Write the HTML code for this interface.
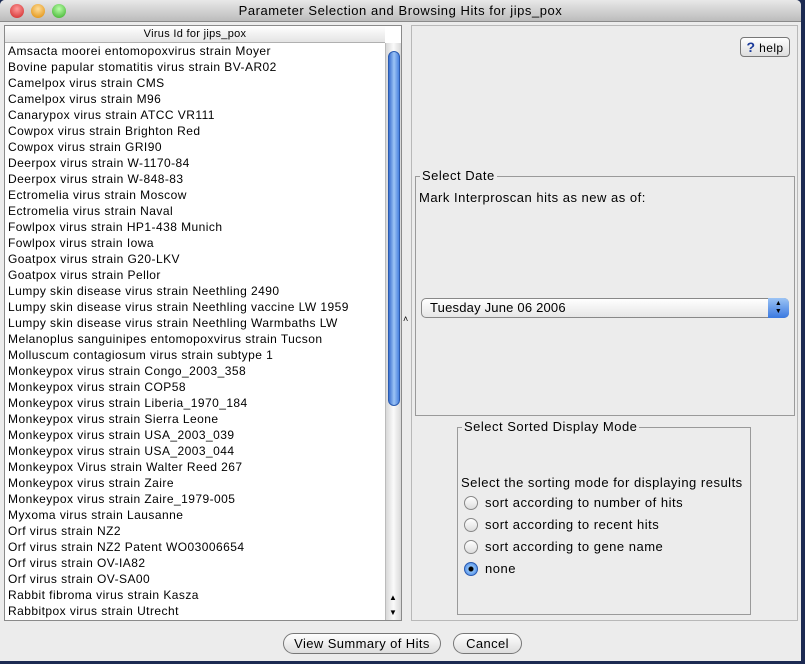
<!DOCTYPE html>
<html><head><style>
*{margin:0;padding:0;box-sizing:border-box}
body{width:805px;height:664px;background:#1c2a52;font-family:"Liberation Sans",sans-serif;font-size:12px;color:#000;position:relative;overflow:hidden}
.win{position:absolute;left:0;top:0;width:801px;height:661px;background:#ececec;border-radius:5px 5px 0 0;overflow:hidden}
.title{height:22px;background:linear-gradient(#e8e8e8,#bcbcbc);border-bottom:1px solid #8a8a8a;text-align:center;font-size:13px;line-height:22px;letter-spacing:0.55px}
.dot{position:absolute;top:4px;width:14px;height:14px;border-radius:50%}
.a{position:absolute}
.list{left:4px;top:25px;width:398px;height:596px;border:1px solid #8a8a8a;background:#fff}
.hdr{height:17px;border-bottom:1px solid #b0b0b0;background:linear-gradient(#fff,#e4e4e4);text-align:center;font-size:11px;line-height:17px;width:380px;letter-spacing:0.3px}
.rows div{height:16px;line-height:16px;padding-left:3px;white-space:nowrap;letter-spacing:0.45px}
.sb{left:380px;top:17px;width:16px;height:577px;background:linear-gradient(90deg,#d8d8d8,#fafafa,#d8d8d8);border-left:1px solid #bbb}
.thumb{left:2px;top:8px;width:12px;height:355px;border-radius:6px;background:linear-gradient(90deg,#3a6fd0,#9cc4f5,#4a82e0);border:1px solid #2a5bb0}
.grp{border:1px solid #9a9a9a;font-size:13px;letter-spacing:0.5px}
.leg{position:absolute;top:-9px;background:#ececec;padding:0 2px}
.btn{border:1px solid #777;border-radius:11px;background:linear-gradient(#fff,#ddd);text-align:center;font-size:13px;line-height:19px;letter-spacing:0.4px}
.r{position:absolute;left:6px;width:14px;height:14px;border-radius:50%;border:1px solid #888;background:linear-gradient(#fff,#ddd)}
.rl{position:absolute;left:27px;white-space:nowrap}
</style></head><body>
<div class="win">
<div class="title">Parameter Selection and Browsing Hits for jips_pox</div>
<div class="dot" style="left:10px;background:radial-gradient(circle at 50% 35%,#f99,#c22)"></div>
<div class="dot" style="left:31px;background:radial-gradient(circle at 50% 35%,#fd9,#d80)"></div>
<div class="dot" style="left:52px;background:radial-gradient(circle at 50% 35%,#bfa,#3a2)"></div>
<div class="a list">
<div class="hdr">Virus Id for jips_pox</div>
<div class="rows">
<div>Amsacta moorei entomopoxvirus strain Moyer</div>
<div>Bovine papular stomatitis virus strain BV-AR02</div>
<div>Camelpox virus strain CMS</div>
<div>Camelpox virus strain M96</div>
<div>Canarypox virus strain ATCC VR111</div>
<div>Cowpox virus strain Brighton Red</div>
<div>Cowpox virus strain GRI90</div>
<div>Deerpox virus strain W-1170-84</div>
<div>Deerpox virus strain W-848-83</div>
<div>Ectromelia virus strain Moscow</div>
<div>Ectromelia virus strain Naval</div>
<div>Fowlpox virus strain HP1-438 Munich</div>
<div>Fowlpox virus strain Iowa</div>
<div>Goatpox virus strain G20-LKV</div>
<div>Goatpox virus strain Pellor</div>
<div>Lumpy skin disease virus strain Neethling 2490</div>
<div>Lumpy skin disease virus strain Neethling vaccine LW 1959</div>
<div>Lumpy skin disease virus strain Neethling Warmbaths LW</div>
<div>Melanoplus sanguinipes entomopoxvirus strain Tucson</div>
<div>Molluscum contagiosum virus strain subtype 1</div>
<div>Monkeypox virus strain Congo_2003_358</div>
<div>Monkeypox virus strain COP58</div>
<div>Monkeypox virus strain Liberia_1970_184</div>
<div>Monkeypox virus strain Sierra Leone</div>
<div>Monkeypox virus strain USA_2003_039</div>
<div>Monkeypox virus strain USA_2003_044</div>
<div>Monkeypox Virus strain Walter Reed 267</div>
<div>Monkeypox virus strain Zaire</div>
<div>Monkeypox virus strain Zaire_1979-005</div>
<div>Myxoma virus strain Lausanne</div>
<div>Orf virus strain NZ2</div>
<div>Orf virus strain NZ2 Patent WO03006654</div>
<div>Orf virus strain OV-IA82</div>
<div>Orf virus strain OV-SA00</div>
<div>Rabbit fibroma virus strain Kasza</div>
<div>Rabbitpox virus strain Utrecht</div>
</div>
<div class="a sb"><div class="a thumb"></div>
<div class="a" style="left:3px;top:550px;font-size:8px">▲</div>
<div class="a" style="left:3px;top:565px;font-size:8px">▼</div></div>
</div>
<div class="a" style="left:403px;top:314px;font-size:9px">˄</div>
<div class="a" style="left:411px;top:25px;width:387px;height:596px;border:1px solid #b8b8b8"></div>
<div class="a btn" style="left:740px;top:37px;width:50px;height:20px;border-radius:4px;font-size:12px;line-height:18px"><b style="color:#1a3a9a;font-size:14px">?</b> help</div>
<div class="a grp" style="left:415px;top:176px;width:380px;height:240px"><span class="leg" style="left:4px">Select Date</span>
<div class="a" style="left:3px;top:13px">Mark Interproscan hits as new as of:</div>
<div class="a" style="left:5px;top:121px;width:368px;height:20px;border:1px solid #888;border-radius:5px;background:linear-gradient(#fff,#e6e6e6);font-size:13px;line-height:18px;padding-left:8px;letter-spacing:0.2px">Tuesday June 06 2006
<div class="a" style="right:-1px;top:-1px;width:21px;height:20px;border-radius:0 5px 5px 0;background:linear-gradient(#9cc4f5,#3a78e0);font-size:7px;line-height:8px;text-align:center;padding-top:2px">▲<br>▼</div></div></div>
<div class="a grp" style="left:457px;top:427px;width:294px;height:188px"><span class="leg" style="left:4px">Select Sorted Display Mode</span>
<div class="a" style="left:3px;top:47px;white-space:nowrap">Select the sorting mode for displaying results</div>
<div class="r" style="top:68px"></div><div class="rl" style="top:67px">sort according to number of hits</div>
<div class="r" style="top:90px"></div><div class="rl" style="top:89px">sort according to recent hits</div>
<div class="r" style="top:112px"></div><div class="rl" style="top:111px">sort according to gene name</div>
<div class="r" style="top:134px;background:radial-gradient(circle,#000 2px,#8cc0f8 3px,#3a78e0);border-color:#2a5bb0"></div><div class="rl" style="top:133px">none</div>
</div>
<div class="a btn" style="left:283px;top:633px;width:158px;height:21px">View Summary of Hits</div>
<div class="a btn" style="left:453px;top:633px;width:69px;height:21px">Cancel</div>
</div>
</body></html>
